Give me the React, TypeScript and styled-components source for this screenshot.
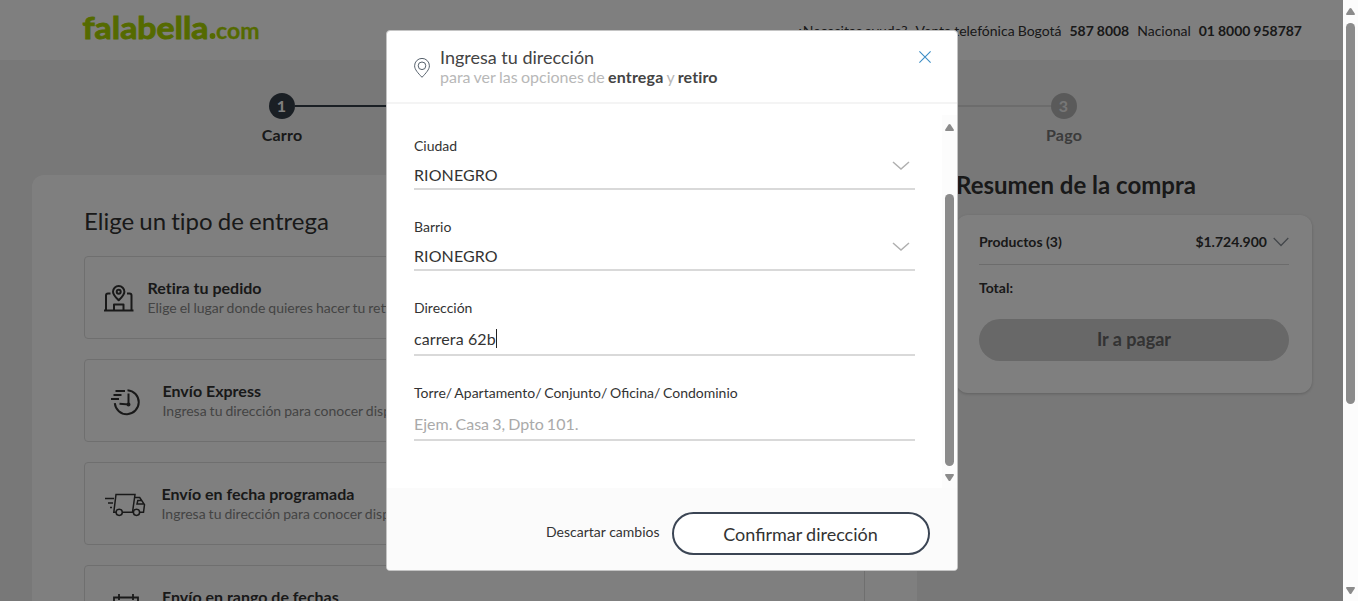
import React from "react";
import styled, { createGlobalStyle } from "styled-components";

const GlobalStyle = createGlobalStyle`
  *, *::before, *::after { box-sizing: border-box; }
  body { margin: 0; overflow: hidden; font-family: Lato, "Liberation Sans", sans-serif; color: #333; }
  button { font-family: inherit; padding: 0; background: none; border: 0; color: inherit; }
`;

const Screen = styled.div`
  display: flex;
  width: 1358px;
  height: 601px;
  overflow: hidden;
`;

const Page = styled.div`
  position: relative;
  flex: 1;
  overflow: hidden;
  background: #f0f0f0;
`;

const TopBar = styled.header`
  display: flex;
  align-items: center;
  justify-content: space-between;
  height: 60px;
  padding: 0 41px 0 82px;
  background: #fff;
`;

const Logo = styled.svg`
  display: block;
  width: 180px;
  height: 36px;
  overflow: visible;
  font-family: Lato, sans-serif;
  font-weight: 700;
  fill: #aad500;
  stroke: #aad500;
`;

const Help = styled.div`
  display: flex;
  gap: 8px;
  padding-top: 2px;
  font-size: 14px;
  line-height: 20px;
  word-spacing: -0.5px;
  white-space: nowrap;
`;

const Stepper = styled.div`
  display: flex;
  justify-content: center;
  height: 115px;
  padding: 33px 0 0 2px;
`;

const Step = styled.div`
  display: flex;
  flex-direction: column;
  align-items: center;
  width: 26px;
  color: #333;
`;

const StepDot = styled.div<{ $active?: boolean }>`
  width: 26px;
  height: 26px;
  border-radius: 50%;
  background: ${(p) => (p.$active ? "#343e49" : "#b4b4b4")};
  color: ${(p) => (p.$active ? "#fff" : "#eee")};
  font-size: 16px;
  font-weight: 700;
  line-height: 26px;
  text-align: center;
`;

const StepName = styled.div<{ $active?: boolean }>`
  margin: 6px 0 0 1px;
  font-size: 16px;
  font-weight: 700;
  line-height: 20px;
  letter-spacing: 0.2px;
  color: ${(p) => (p.$active ? "#333" : "#777")};
`;

const StepLine = styled.div<{ $active?: boolean }>`
  width: 365px;
  height: 2px;
  margin-top: 12px;
  background: ${(p) => (p.$active ? "#343e49" : "#d8d8d8")};
`;

const Columns = styled.main`
  display: flex;
  gap: 39px;
  padding: 0 31px 0 32px;
`;

const DeliveryCard = styled.section`
  width: 885px;
  height: 560px;
  padding: 30px 52px;
  border-radius: 12px 12px 0 0;
  background: #fff;
`;

const DeliveryTitle = styled.h1`
  margin: 0 0 19px;
  font-size: 24px;
  font-weight: 400;
  line-height: 32px;
  word-spacing: -1px;
  font-variant-ligatures: none;
`;

const Option = styled.div<{ $iconWidth: number }>`
  display: grid;
  grid-template-columns: ${(p) => p.$iconWidth}px 1fr;
  align-items: center;
  height: 83px;
  margin-bottom: 20px;
  padding-left: 19px;
  border: 1px solid #dedede;
  border-radius: 4px;
`;

const IconCell = styled.div<{ $indent: number }>`
  padding: 2px 0 0 ${(p) => p.$indent}px;
`;

const OptionName = styled.div`
  font-size: 16px;
  font-weight: 700;
  line-height: 20px;
  font-variant-ligatures: none;
`;

const OptionHint = styled.div`
  font-size: 14px;
  line-height: 20px;
  word-spacing: -0.6px;
  color: #888;
`;

const LineIcon = styled.svg`
  display: block;
  fill: none;
  stroke: #333;
`;

const Summary = styled.aside`
  flex: 1;
`;

const SummaryTitle = styled.h2`
  margin: -7px 0 14px;
  font-size: 24px;
  font-weight: 700;
  line-height: 33px;
`;

const SummaryCard = styled.div`
  height: 178px;
  padding: 8px 23px;
  border-radius: 12px;
  background: #fff;
  box-shadow: 0 1px 3px rgba(0, 0, 0, 0.2);
`;

const SummaryRow = styled.div<{ $ruled?: boolean }>`
  display: flex;
  justify-content: space-between;
  align-items: center;
  height: ${(p) => (p.$ruled ? 42 : 46)}px;
  padding-bottom: ${(p) => (p.$ruled ? 4 : 1)}px;
  border-bottom: ${(p) => (p.$ruled ? "1px solid #d8d8d8" : "0")};
  font-size: 14px;
  font-weight: 700;
`;

const Price = styled.span`
  display: flex;
  align-items: center;
  gap: 6px;
`;

const PayButton = styled.button`
  display: block;
  width: 310px;
  height: 42px;
  margin-top: 8px;
  padding-bottom: 2px;
  border-radius: 21px;
  background: #d0d0d0;
  font-size: 18px;
  font-weight: 700;
  color: #666;
`;

const Overlay = styled.div`
  position: absolute;
  inset: 0;
  display: flex;
  justify-content: center;
  align-items: flex-start;
  padding: 30px 0 0 1px;
  background: rgba(0, 0, 0, 0.5);
`;

const Dialog = styled.div`
  display: flex;
  flex-direction: column;
  width: 572px;
  height: 541px;
  border: 1px solid #c4c4c4;
  border-radius: 4px;
  background: #fff;
  overflow: hidden;
`;

const DialogHeader = styled.div`
  display: flex;
  align-items: flex-start;
  height: 73px;
  padding: 15px 26px 0 27px;
  border-bottom: 2px solid #f4f4f4;
`;

const Heading = styled.div`
  flex: 1;
  margin-left: 10px;
`;

const DialogTitle = styled.div`
  font-size: 18px;
  line-height: 22px;
  color: #444;
`;

const DialogSub = styled.div`
  font-size: 16px;
  line-height: 18px;
  word-spacing: -0.7px;
  color: #b8b8b8;
  b { color: #444; letter-spacing: 0.15px; }
`;

const Pin = styled.svg`
  margin-top: 12px;
`;

const CloseButton = styled.button`
  height: 12px;
  margin-top: 5px;
  line-height: 0;
`;

const DialogBody = styled.div`
  display: flex;
  justify-content: space-between;
  height: 384px;
`;

const Form = styled.div`
  width: 501px;
  margin-left: 27px;
  padding-top: 32px;
`;

const Field = styled.div<{ $tall?: boolean }>`
  height: ${(p) => (p.$tall ? 85 : 81)}px;
`;

const Label = styled.div`
  font-size: 14px;
  line-height: 20px;
  word-spacing: -0.9px;
`;

const Value = styled.div<{ $tall?: boolean; $empty?: boolean }>`
  display: flex;
  align-items: center;
  height: ${(p) => (p.$tall ? 38 : 34)}px;
  padding-top: 5px;
  border-bottom: 2px solid #d9d9d9;
  font-size: 16px;
  letter-spacing: ${(p) => (p.$empty ? 0 : 0.1)}px;
  word-spacing: ${(p) => (p.$empty ? -1 : 0)}px;
  color: ${(p) => (p.$empty ? "#aaa" : "#333")};
`;

const Chevron = styled.svg`
  margin: -19px 5px 0 auto;
`;

const Caret = styled.span`
  width: 1px;
  height: 19px;
  background: #222;
`;

const DialogFooter = styled.div`
  display: flex;
  align-items: flex-start;
  justify-content: flex-end;
  flex: 1;
  gap: 12px;
  padding: 24px 27.5px 0 0;
  background: #fbfbfb;
`;

const DiscardButton = styled.button`
  margin-top: 10px;
  font-size: 14px;
  line-height: 20px;
`;

const ConfirmButton = styled.button`
  width: 258px;
  height: 43px;
  padding-top: 1px;
  border: 2px solid #3b4554;
  border-radius: 22px;
  background: #fff;
  font-size: 18px;
  word-spacing: -0.5px;
  line-height: 39px;
`;

const ScrollTrack = styled.div<{ $inner?: boolean }>`
  display: flex;
  flex-direction: column;
  align-items: center;
  width: 15px;
  margin-top: ${(p) => (p.$inner ? 11 : 0)}px;
  padding: ${(p) => (p.$inner ? 9 : 8)}px 0 7px;
  background: #fcfcfc;
`;

const ScrollThumb = styled.div<{ $top: number; $height: number }>`
  width: 9px;
  height: ${(p) => p.$height}px;
  margin: ${(p) => p.$top}px 0 auto;
  border-radius: 5px;
  background: #8b8b8b;
`;

const ArrowIcon = ({ down }: { down?: boolean }) => (
  <svg width="9" height="7" viewBox="0 0 9 7">
    <path
      d={down ? "M0 1q0-1 1-1h7q1 0 1 1L5.5 6.4q-1 1-2 0z" : "M0 6q0 1 1 1h7q1 0 1-1L5.5.6q-1-1-2 0z"}
      fill="#8b8b8b"
    />
  </svg>
);

const SelectChevron = () => (
  <Chevron width="18" height="9" viewBox="0 0 18 9">
    <path d="M1 1l8 7 8-7" fill="none" stroke="#b0b0b0" strokeWidth="1.5" />
  </Chevron>
);

const StoreIcon = () => (
  <LineIcon width="30" height="28" viewBox="0 0 30 28" strokeWidth="2" strokeLinejoin="round">
    <path d="M0 25.500h29.500M2 25V10.500q0-2 2-2h2.500M27.500 25V10.500q0-2-2-2H23M10 25v-5.500h9.500V25" />
    <path d="M14.700 15.300C11.500 12 9 9.700 9 6.700a5.700 5.700 0 0 1 11.400 0c0 3-2.500 5.300-5.700 8.600z" />
    <circle cx="14.700" cy="6.700" r="2" />
  </LineIcon>
);

const ExpressIcon = () => (
  <LineIcon width="30" height="28" viewBox="0 0 30 28" strokeWidth="2">
    <path d="M16.500 2.200a12 12 0 1 1-12.700 13M17.500 5.500v11l-9-.7M4.500 3h9.500M2.500 7h8M0 11h8" />
    <circle cx="17.500" cy="16.500" r="1" fill="#333" />
  </LineIcon>
);

const TruckIcon = () => (
  <LineIcon width="42" height="24" viewBox="0 0 42 24" strokeWidth="1.500">
    <path d="M0 5.500h9M3 10h5M5 14.500h2M11 19.300H8.800L11 1.500h19l-2.500 17.800H18M29.500 4.500h5.200l4.800 7.200-1 7.600h-3.500M39 11h-7l.8-3.500h4" />
    <circle cx="14.200" cy="19.300" r="3.100" />
    <circle cx="31.500" cy="19.300" r="3.100" />
  </LineIcon>
);

const CalendarIcon = () => (
  <LineIcon width="28" height="28" viewBox="0 0 28 28" strokeWidth="1.8">
    <path d="M1 3.500h24v23H1zM1 9h24M6 0v6M20 0v6" />
  </LineIcon>
);

const options = [
  { name: "Retira tu pedido", hint: "Elige el lugar donde quieres hacer tu retiro", icon: <StoreIcon />, width: 43.5, indent: 0 },
  { name: "Envío Express", hint: "Ingresa tu dirección para conocer disponibilidad", icon: <ExpressIcon />, width: 58.5, indent: 7 },
  { name: "Envío en fecha programada", hint: "Ingresa tu dirección para conocer disponibilidad", icon: <TruckIcon />, width: 57.5, indent: 1 },
  { name: "Envío en rango de fechas", hint: "Ingresa tu dirección para conocer disponibilidad", icon: <CalendarIcon />, width: 58, indent: 9 },
];

export default function App() {
  return (
    <Screen>
      <GlobalStyle />
      <Page>
        <TopBar>
          <Logo viewBox="0 0 180 36">
            <text x="0.500" y="27" fontSize="29.500" strokeWidth="0.900" textLength="126" lengthAdjust="spacingAndGlyphs">falabella</text>
            <circle cx="130.500" cy="24" r="2.900" stroke="none" />
            <text x="134" y="27" fontSize="23" strokeWidth="0.300" textLength="43.500" lengthAdjust="spacingAndGlyphs">com</text>
          </Logo>
          <Help>
            <span>¿Necesitas ayuda?</span>
            <span>Venta telefónica Bogotá</span>
            <b>587 8008</b>
            <span>Nacional</span>
            <b>01 8000 958787</b>
          </Help>
        </TopBar>
        <Stepper>
          <Step>
            <StepDot $active>1</StepDot>
            <StepName $active>Carro</StepName>
          </Step>
          <StepLine $active />
          <Step>
            <StepDot $active>2</StepDot>
            <StepName $active>Entrega</StepName>
          </Step>
          <StepLine />
          <Step>
            <StepDot>3</StepDot>
            <StepName>Pago</StepName>
          </Step>
        </Stepper>
        <Columns>
          <DeliveryCard>
            <DeliveryTitle>Elige un tipo de entrega</DeliveryTitle>
            {options.map((o) => (
              <Option key={o.name} $iconWidth={o.width}>
                <IconCell $indent={o.indent}>{o.icon}</IconCell>
                <div>
                  <OptionName>{o.name}</OptionName>
                  <OptionHint>{o.hint}</OptionHint>
                </div>
              </Option>
            ))}
          </DeliveryCard>
          <Summary>
            <SummaryTitle>Resumen de la compra</SummaryTitle>
            <SummaryCard>
              <SummaryRow $ruled>
                <span>Productos (3)</span>
                <Price>
                  $1.724.900
                  <svg width="16" height="10" viewBox="0 0 16 10">
                    <path d="M.7 1L8 8.500 15.300 1" fill="none" stroke="#888f96" strokeWidth="1.300" />
                  </svg>
                </Price>
              </SummaryRow>
              <SummaryRow>Total:</SummaryRow>
              <PayButton>Ir a pagar</PayButton>
            </SummaryCard>
          </Summary>
        </Columns>
        <Overlay>
          <Dialog>
            <DialogHeader>
              <Pin width="16" height="20" viewBox="0 0 16 20" fill="none" stroke="#56616c">
                <path d="M8 19.300C4 15 .6 11.500.6 7.800a7.400 7.400 0 0 1 14.800 0c0 3.700-3.400 7.200-7.400 11.500z" />
                <circle cx="8" cy="7.800" r="3.800" />
              </Pin>
              <Heading>
                <DialogTitle>Ingresa tu dirección</DialogTitle>
                <DialogSub>
                  para ver las opciones de <b>entrega</b> y <b>retiro</b>
                </DialogSub>
              </Heading>
              <CloseButton aria-label="Cerrar">
                <svg width="12" height="12" viewBox="0 0 12 12">
                  <path d="M.4.4l11.200 11.200M11.600.4L.4 11.600" stroke="#3c8dc5" strokeWidth="1.100" />
                </svg>
              </CloseButton>
            </DialogHeader>
            <DialogBody>
              <Form>
                <Field>
                  <Label>Ciudad</Label>
                  <Value>
                    RIONEGRO
                    <SelectChevron />
                  </Value>
                </Field>
                <Field>
                  <Label>Barrio</Label>
                  <Value>
                    RIONEGRO
                    <SelectChevron />
                  </Value>
                </Field>
                <Field $tall>
                  <Label>Dirección</Label>
                  <Value $tall>
                    carrera 62b
                    <Caret />
                  </Value>
                </Field>
                <Field $tall>
                  <Label>Torre/ Apartamento/ Conjunto/ Oficina/ Condominio</Label>
                  <Value $tall $empty>Ejem. Casa 3, Dpto 101.</Value>
                </Field>
              </Form>
              <ScrollTrack $inner>
                <ArrowIcon />
                <ScrollThumb $top={63} $height={272} />
                <ArrowIcon down />
              </ScrollTrack>
            </DialogBody>
            <DialogFooter>
              <DiscardButton>Descartar cambios</DiscardButton>
              <ConfirmButton>Confirmar dirección</ConfirmButton>
            </DialogFooter>
          </Dialog>
        </Overlay>
      </Page>
      <ScrollTrack>
        <ArrowIcon />
        <ScrollThumb $top={8} $height={381} />
        <ArrowIcon down />
      </ScrollTrack>
    </Screen>
  );
}
